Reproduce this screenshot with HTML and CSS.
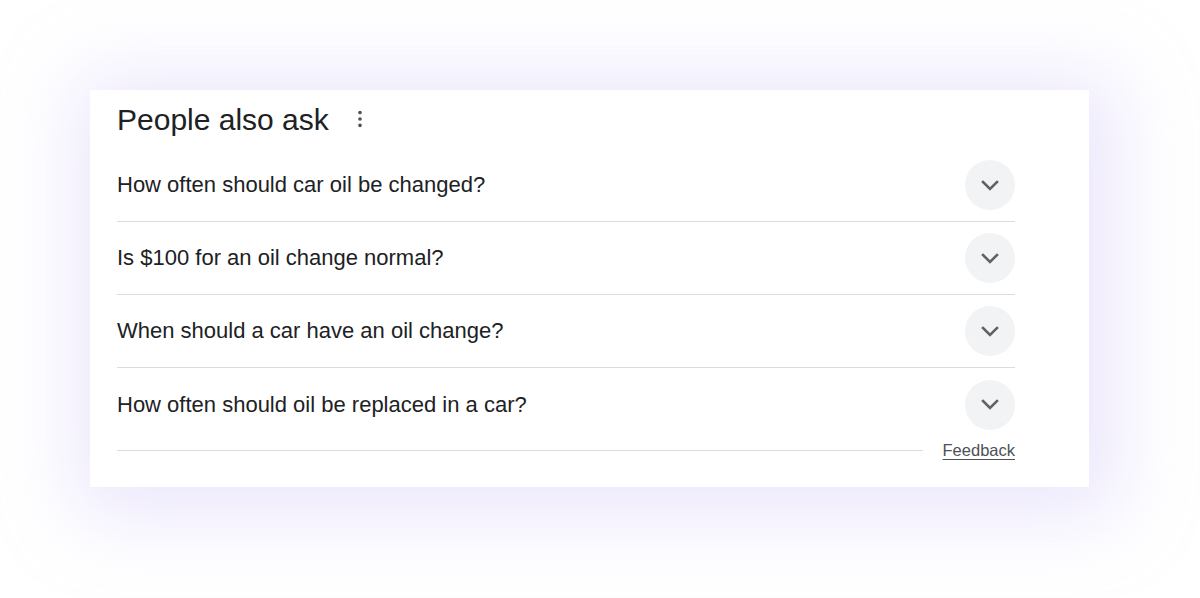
FILE: index.html
```html
<!DOCTYPE html>
<html lang="en">
<head>
<meta charset="utf-8">
<title>People also ask</title>
<link rel="stylesheet" href="styles.css">
</head>
<body>
<div class="stage">
  <section class="card">
    <header class="head">
      <h2 class="title">People also ask</h2>
      <span class="more" aria-label="More options">
        <svg width="24" height="24" viewBox="0 0 24 24"><circle cx="12" cy="5.6" r="1.8"/><circle cx="12" cy="12" r="1.8"/><circle cx="12" cy="18.4" r="1.8"/></svg>
      </span>
    </header>
    <div class="row">
      <span class="q">How often should car oil be changed?</span>
      <span class="chev"><svg width="18" height="11" viewBox="0 0 18 11"><polyline points="2,2 9,9 16,2"/></svg></span>
    </div>
    <div class="row">
      <span class="q">Is $100 for an oil change normal?</span>
      <span class="chev"><svg width="18" height="11" viewBox="0 0 18 11"><polyline points="2,2 9,9 16,2"/></svg></span>
    </div>
    <div class="row">
      <span class="q">When should a car have an oil change?</span>
      <span class="chev"><svg width="18" height="11" viewBox="0 0 18 11"><polyline points="2,2 9,9 16,2"/></svg></span>
    </div>
    <div class="row last">
      <span class="q">How often should oil be replaced in a car?</span>
      <span class="chev"><svg width="18" height="11" viewBox="0 0 18 11"><polyline points="2,2 9,9 16,2"/></svg></span>
    </div>
    <footer class="foot">
      <span class="rule"></span>
      <a class="feedback" href="#">Feedback</a>
    </footer>
  </section>
</div>
</body>
</html>
```

FILE: styles.css
```css
html, body {
  margin: 0;
  padding: 0;
  background: #ffffff;
}

body {
  font-family: "Liberation Sans", Arial, sans-serif;
  color: #202124;
}

.stage {
  width: 1200px;
  height: 598px;
  padding: 90px 111px 0 90px;
  box-sizing: border-box;
  overflow: hidden;
}

.card {
  width: 999px;
  height: 397px;
  box-sizing: border-box;
  background: #ffffff;
  padding: 0 74px 0 27px;
  box-shadow: 8px 8px 72px 22px rgba(200, 185, 245, 0.34);
}

.head {
  display: flex;
  align-items: center;
  height: 59px;
  gap: 19px;
}

.title {
  margin: 0;
  font-weight: 400;
  font-size: 30px;
  line-height: 40px;
  color: #202124;
}

.more {
  display: flex;
  width: 24px;
  height: 24px;
  margin-top: -1px;
}

.more svg {
  fill: #4d5156;
}

.row {
  display: flex;
  align-items: center;
  justify-content: space-between;
  height: 73px;
  box-sizing: border-box;
  border-bottom: 1px solid #dadce0;
}

.row.last {
  border-bottom: none;
}

.q {
  font-size: 22px;
  line-height: 28px;
  color: #202124;
}

.chev {
  width: 50px;
  height: 50px;
  border-radius: 50%;
  background: #f1f3f4;
  display: flex;
  align-items: center;
  justify-content: center;
}

.chev svg polyline {
  fill: none;
  stroke: #5f6368;
  stroke-width: 2.6;
  stroke-linecap: square;
}

.foot {
  display: flex;
  align-items: center;
  height: 20px;
  margin-top: -1px;
  gap: 20px;
}

.rule {
  flex: 1;
  height: 1px;
  background: #dadce0;
}

.feedback {
  font-size: 16.5px;
  line-height: 20px;
  color: #4d5156;
  text-decoration: underline;
  text-underline-offset: 3px;
}
```
